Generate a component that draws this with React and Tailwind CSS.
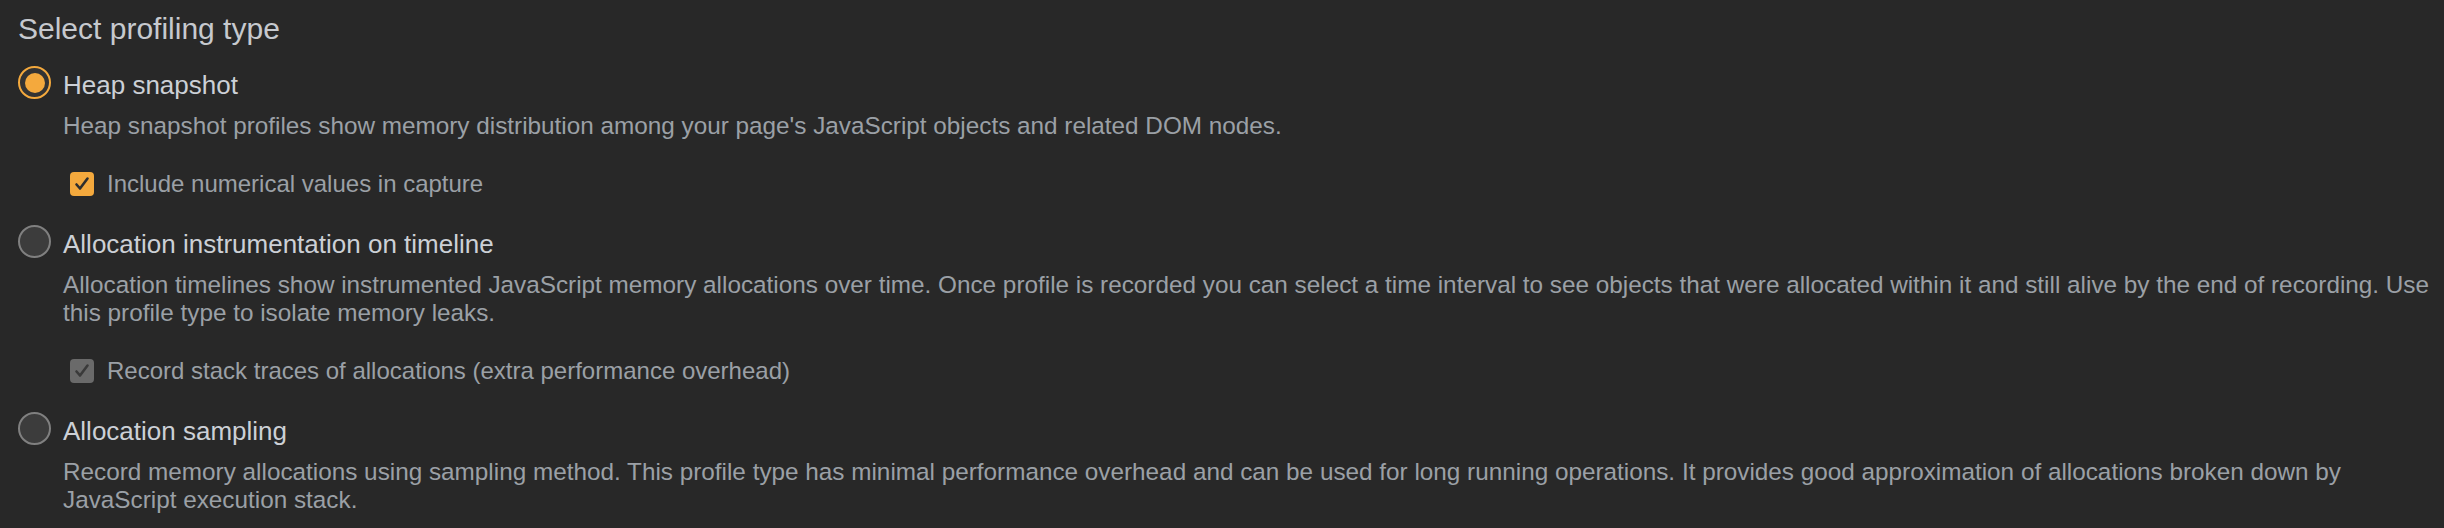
import React, { useState } from "react";

const OPTIONS = [
  {
    id: "heap",
    label: "Heap snapshot",
    description:
      "Heap snapshot profiles show memory distribution among your page's JavaScript objects and related DOM nodes.",
    checkbox: { label: "Include numerical values in capture", checked: true, disabled: false },
  },
  {
    id: "timeline",
    label: "Allocation instrumentation on timeline",
    description:
      "Allocation timelines show instrumented JavaScript memory allocations over time. Once profile is recorded you can select a time interval to see objects that were allocated within it and still alive by the end of recording. Use this profile type to isolate memory leaks.",
    checkbox: {
      label: "Record stack traces of allocations (extra performance overhead)",
      checked: true,
      disabled: true,
    },
  },
  {
    id: "sampling",
    label: "Allocation sampling",
    description:
      "Record memory allocations using sampling method. This profile type has minimal performance overhead and can be used for long running operations. It provides good approximation of allocations broken down by JavaScript execution stack.",
  },
];

const Radio = ({ checked }) =>
  checked ? (
    <span className="mt-[-3px] flex h-[33px] w-[33px] shrink-0 items-center justify-center rounded-full border-[2px] border-[#f4a93d] bg-[#333333]">
      <span className="h-[20px] w-[20px] rounded-full bg-[#f4a93d]" />
    </span>
  ) : (
    <span className="mt-[-3px] h-[33px] w-[33px] shrink-0 rounded-full border-[2px] border-[#808080] bg-[#3c3c3c]" />
  );

const Checkbox = ({ checked, disabled }) => (
  <span
    className={`flex h-[24px] w-[24px] shrink-0 items-center justify-center rounded-[4px] ${
      disabled ? "bg-[#6a6a6a]" : "bg-[#f4a93d]"
    }`}
  >
    {checked && (
      <svg width="18" height="18" viewBox="0 0 18 18" fill="none">
        <path
          d="M3.5 9.5 L7 13.5 L14.5 3.5"
          stroke={disabled ? "#3a3a3a" : "#2e2e2e"}
          strokeWidth="2.6"
          strokeLinecap="round"
          strokeLinejoin="round"
        />
      </svg>
    )}
  </span>
);

export default function App() {
  const [selected, setSelected] = useState("heap");

  return (
    <div className="min-h-[528px] w-full bg-[#282828] pl-[18px] pr-[6px] pt-[11px] font-['Liberation_Sans',Arial,sans-serif]">
      <h1 className="text-[30px] leading-[36px] text-[#c6c9ce]">Select profiling type</h1>

      <div className="mt-[22px] flex flex-col gap-[30px]">
        {OPTIONS.map((opt) => (
          <div key={opt.id}>
            <div
              className="flex cursor-pointer items-start gap-[12px]"
              onClick={() => setSelected(opt.id)}
            >
              <Radio checked={selected === opt.id} />
              <span className="text-[26px] leading-[32px] text-[#ccd0d6]">{opt.label}</span>
            </div>
            <p className="ml-[45px] mt-[11px] text-[24.3px] leading-[28px] text-[#9ba0a6]">
              {opt.description}
            </p>
            {opt.checkbox && (
              <div className="ml-[52px] mt-[30px] flex items-center gap-[13px]">
                <Checkbox checked={opt.checkbox.checked} disabled={opt.checkbox.disabled} />
                <span className="text-[24px] leading-[28px] text-[#9ba0a6]">{opt.checkbox.label}</span>
              </div>
            )}
          </div>
        ))}
      </div>
    </div>
  );
}
